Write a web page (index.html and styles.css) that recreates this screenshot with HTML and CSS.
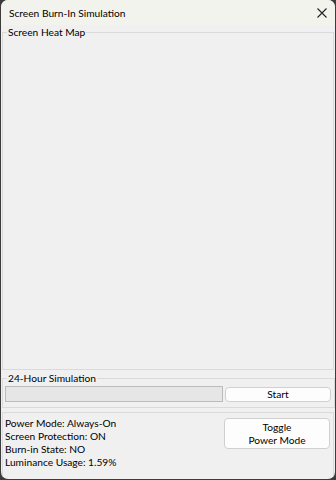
FILE: index.html
```html
<!DOCTYPE html>
<html lang="en">
<head>
    <meta charset="UTF-8">
    <meta name="viewport" content="width=device-width, initial-scale=1.0">
    <title>Screen Burn-In Simulation</title>
    <link rel="stylesheet" href="styles.css">
</head>
<body>
    <div class="window">
        <div class="titlebar">
            <span class="title">Screen Burn-In Simulation</span>
            <svg class="close" width="10" height="10" viewBox="0 0 10 10">
                <path d="M0.5 0.5 L9.5 9.5 M9.5 0.5 L0.5 9.5" stroke="#222" stroke-width="1.1" fill="none"/>
            </svg>
        </div>
        <div class="content">
            <fieldset class="group heat-group">
                <legend>Screen Heat Map</legend>
                <div class="heat-map"></div>
            </fieldset>

            <fieldset class="group sim-group">
                <legend>24-Hour Simulation</legend>
                <div class="sim-row">
                    <div class="progress"><div class="progress-fill" style="width: 0%"></div></div>
                    <button class="btn start-btn">Start</button>
                </div>
            </fieldset>

            <fieldset class="group status-group">
                <div class="status-row">
                    <div class="status">
                        <p>Power Mode: Always-On</p>
                        <p>Screen Protection: ON</p>
                        <p>Burn-in State: NO</p>
                        <p>Luminance Usage: 1.59%</p>
                    </div>
                    <button class="btn toggle-btn">Toggle<br>Power Mode</button>
                </div>
            </fieldset>
        </div>
    </div>
</body>
</html>
```

FILE: styles.css
```css
* {
    margin: 0;
    padding: 0;
    box-sizing: border-box;
}
body {
    background: #3c3c3c;
    font-family: "Lato", "Noto Sans", sans-serif;
    font-size: 10.2px;
    color: #000;
}
.window {
    margin-left: 1px;
    width: 334px;
    height: 479px;
    background: #f0f0f0;
    border-radius: 7px;
    overflow: hidden;
    display: flex;
    flex-direction: column;
}
.titlebar {
    flex-shrink: 0;
    height: 25px;
    background: #f3f3ee;
    display: flex;
    align-items: center;
    justify-content: space-between;
    padding: 1px 8px 0 8px;
}
.close {
    display: block;
}
.content {
    flex: 1;
    padding: 0 1px 0 1px;
}
.group {
    border: 1px solid #dadada;
    padding: 0 3px 0 2px;
}
.group legend {
    line-height: 14px;
    margin-left: 2px;
    padding: 0 1px;
}
.heat-map {
    height: 330px;
}
.sim-group {
    margin-top: 1px;
    padding-top: 1px;
    padding-bottom: 5px;
}
.sim-row {
    display: flex;
    gap: 2px;
    align-items: center;
}
.progress {
    width: 218px;
    height: 16px;
    background: #e6e6e6;
    border: 1px solid #bcbcbc;
}
.progress-fill {
    height: 100%;
    background: #06b025;
}
.btn {
    font-family: inherit;
    font-size: inherit;
    color: #000;
    background: #fdfdfd;
    border: 1px solid #d0d0d0;
    border-radius: 4px;
}
.start-btn {
    width: 106px;
    height: 15px;
    line-height: 13px;
}
.status-group {
    margin-top: 4px;
    height: 66px;
    border-bottom: none;
    padding-top: 4px;
}
.status-row {
    display: flex;
    justify-content: space-between;
    align-items: flex-start;
}
.status p {
    line-height: 13px;
}
.toggle-btn {
    margin-top: 1px;
    width: 106px;
    height: 31px;
    line-height: 13px;
}
```
